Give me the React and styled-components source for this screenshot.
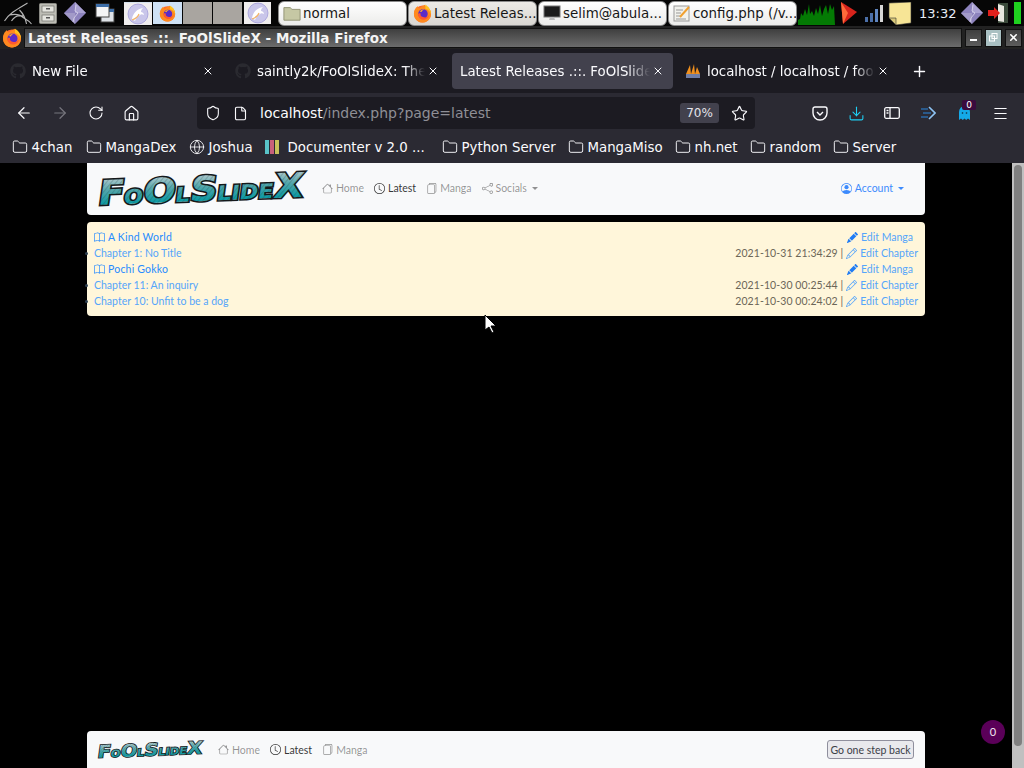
import React from 'react';
import styled, { createGlobalStyle } from 'styled-components';
import {
  ArrowLeft, ArrowRight, RotateCw, Home, Shield, File, Star, Folder, Globe,
  Download, Menu, X, Plus,
} from 'lucide-react';
import {
  BsHouse, BsClock, BsFiles, BsShare, BsPersonCircle, BsBook, BsPencil, BsPencilFill,
} from 'react-icons/bs';
import { FaGithub } from 'react-icons/fa';

const GlobalStyle = createGlobalStyle`
  html, body {
    margin: 0;
    padding: 0;
    background: #000;
    overflow: hidden;
  }
`;

const Screen = styled.div`
  position: relative;
  width: 1024px;
  height: 768px;
  display: flex;
  flex-direction: column;
  overflow: hidden;
  background: #000;
  font-family: "DejaVu Sans", sans-serif;
`;

/* desktop panel */
const Panel = styled.div`
  height: 26px;
  flex: none;
  display: flex;
  align-items: center;
  background: #060606;
  padding-left: 2px;
`;

const PanelIcon = styled.div`
  width: ${props => props.$w}px;
  margin-right: ${props => props.$mr || 0}px;
  height: 24px;
  flex: none;
  display: flex;
  align-items: center;
  justify-content: center;
`;

const Launcher = styled.div`
  width: ${props => props.$w || 28}px;
  height: 22px;
  margin-right: ${props => props.$mr || 1}px;
  flex: none;
  display: flex;
  align-items: center;
  justify-content: center;
  background: ${props => props.$bg || '#f0eeee'};
  border-top: ${props => props.$top ? '1px solid #d6e2ee' : 'none'};
`;

const TaskButton = styled.div`
  width: 129px;
  height: 25px;
  box-sizing: border-box;
  margin-right: 1px;
  flex: none;
  display: flex;
  align-items: center;
  gap: 2px;
  padding: 0 4px;
  border: 1px solid #8b8b8b;
  border-radius: 6px;
  background: ${props => props.$active ? 'linear-gradient(#eceae6, #d9d7d2)' : 'linear-gradient(#ffffff, #ececea)'};
  color: #161616;
  font-size: 13.4px;
  white-space: nowrap;
  overflow: hidden;
  svg {
    flex: none;
  }
`;

const Clock = styled.span`
  width: 36px;
  margin-right: 6px;
  color: #e8eef6;
  font-size: 13px;
  flex: none;
  white-space: nowrap;
`;

/* window title */
const TitleBar = styled.div`
  height: 23px;
  flex: none;
  display: flex;
  align-items: center;
  padding: 0 2px;
  gap: 2px;
  background: #222;
  box-sizing: border-box;
`;

const TitleText = styled.div`
  flex: 1;
  height: 20px;
  box-sizing: border-box;
  padding-left: 3px;
  border: 1px solid #111;
  background: linear-gradient(#3f3f3f, #6c6c6c);
  color: #f4f4f4;
  font-size: 13.5px;
  font-weight: bold;
  line-height: 18px;
  white-space: nowrap;
`;

const WinButton = styled.div`
  width: 17px;
  height: 18px;
  box-sizing: border-box;
  margin-left: 1px;
  flex: none;
  display: flex;
  align-items: center;
  justify-content: center;
  border: 1px solid #111;
  background: ${props => props.$light ? '#a9c0c2' : 'linear-gradient(#3f3f3f, #5d5d5d)'};
  color: #fff;
`;

/* browser tabs */
const TabStrip = styled.div`
  height: 44px;
  flex: none;
  display: flex;
  align-items: center;
  background: #1c1b22;
  color: #fbfbfe;
  font-size: 13.33px;
  padding-left: 2px;
`;

const Tab = styled.div`
  width: 221px;
  height: 36px;
  box-sizing: border-box;
  margin-right: 4px;
  flex: none;
  display: flex;
  align-items: center;
  gap: 6px;
  padding: 0 9px 0 8px;
  border-radius: 4px;
  background: ${props => props.$active ? '#42414d' : 'transparent'};
  svg {
    flex: none;
  }
`;

const TabLabel = styled.span`
  flex: 1;
  min-width: 0;
  margin-right: -4px;
  overflow: hidden;
  white-space: nowrap;
  -webkit-mask-image: linear-gradient(to right, #000 88%, transparent);
  mask-image: linear-gradient(to right, #000 88%, transparent);
`;

const NewTab = styled.div`
  width: 18px;
  margin-left: 8px;
  display: flex;
  justify-content: center;
`;

/* navigation */
const NavBar = styled.div`
  height: 40px;
  flex: none;
  display: flex;
  align-items: center;
  background: #2b2a33;
  color: #fbfbfe;
  padding-left: 15px;
`;

const NavIcon = styled.div`
  width: 18px;
  margin-right: ${props => props.$mr || 0}px;
  flex: none;
  position: relative;
  display: flex;
  align-items: center;
  justify-content: center;
  color: ${props => props.$color || '#fbfbfe'};
`;

const UrlBar = styled.div`
  width: 558px;
  height: 32px;
  box-sizing: border-box;
  margin: 0 56px 0 57px;
  flex: none;
  display: flex;
  align-items: center;
  padding: 0 7px;
  border-radius: 4px;
  background: #1c1b22;
`;

const UrlText = styled.div`
  flex: 1;
  margin-left: 11px;
  font-size: 14px;
  color: #8f8f96;
  white-space: nowrap;
  b {
    font-weight: normal;
    color: #fbfbfe;
  }
`;

const ZoomBadge = styled.div`
  width: 39px;
  height: 20px;
  margin-right: 11px;
  border-radius: 3px;
  background: #42414d;
  font-size: 12px;
  line-height: 20px;
  text-align: center;
  color: #e4e4ea;
`;

const CountBadge = styled.span`
  position: absolute;
  top: -6px;
  left: 7px;
  width: 14px;
  height: 10px;
  border-radius: 2px;
  background: #3a0b3e;
  color: #fff;
  font-size: 9px;
  line-height: 10px;
  text-align: center;
`;

/* bookmarks */
const BookmarkBar = styled.div`
  height: 30px;
  box-sizing: border-box;
  flex: none;
  display: flex;
  align-items: center;
  padding: 0 0 2px 12px;
  background: #2b2a33;
  color: #fbfbfe;
  font-size: 13.33px;
`;

const Bookmark = styled.div`
  width: ${props => props.$w}px;
  flex: none;
  display: flex;
  align-items: center;
  gap: 3.500px;
  white-space: nowrap;
`;

const ColorBars = styled.div`
  display: flex;
  height: 14px;
  width: 14px;
  gap: 1px;
  margin-right: 5px;
  flex: none;
`;

const ColorBar = styled.i`
  flex: 1;
  background: ${props => props.$c};
`;

/* page */
const Viewport = styled.div`
  flex: 1;
  min-height: 0;
  display: flex;
`;

const Page = styled.div`
  flex: 1;
  display: flex;
  flex-direction: column;
  padding: 0 87px;
  color: #212529;
  font-family: Lato, "Noto Sans", sans-serif;
  font-size: 10.5px;
`;

const Scrollbar = styled.div`
  width: 12px;
  flex: none;
  box-sizing: border-box;
  padding: 2px;
  padding-bottom: 22px;
  background: #c0c0c0;
`;

const ScrollThumb = styled.div`
  height: 100%;
  border-radius: 4px;
  background: #808080;
`;

const SiteNav = styled.div`
  height: 52px;
  flex: none;
  box-sizing: border-box;
  display: flex;
  align-items: center;
  padding: 0 21px 2px 10px;
  border-radius: 0 0 4px 4px;
  background: #f8f9fa;
`;

const SiteLinks = styled.div`
  display: flex;
  align-items: center;
  gap: 10px;
  margin-left: ${props => props.$ml}px;
  flex: 1;
`;

const SiteLink = styled.span`
  display: flex;
  align-items: center;
  gap: 3px;
  color: ${props => props.$active ? 'rgba(0, 0, 0, 0.8)' : 'rgba(0, 0, 0, 0.42)'};
  white-space: nowrap;
`;

const Caret = styled.i`
  width: 0;
  height: 0;
  margin-left: 2px;
  border-top: 3px solid currentColor;
  border-left: 3.500px solid transparent;
  border-right: 3.500px solid transparent;
`;

const AccountLink = styled(SiteLink)`
  color: #3d8bfd;
`;

const Notice = styled.ul`
  list-style: none;
  margin: 7px 0 0;
  padding: 7px;
  border-radius: 4px;
  background: #fff6da;
`;

const Row = styled.li`
  position: relative;
  height: 16px;
  display: flex;
  align-items: center;
  justify-content: space-between;
  padding-right: ${props => props.$manga ? 5 : 0}px;
  &::before {
    content: ${props => props.$manga ? 'none' : '""'};
    position: absolute;
    left: -9px;
    top: 7px;
    width: 3px;
    height: 3px;
    border-radius: 50%;
    background: #2c3e50;
  }
`;

const RowLink = styled.span`
  display: flex;
  align-items: center;
  gap: 3px;
  letter-spacing: ${props => props.$strong ? '0.2px' : '0'};
  color: ${props => props.$strong ? '#268bff' : '#55a5fb'};
`;

const EditCol = styled.span`
  display: flex;
  align-items: center;
  gap: 3px;
  color: #6c6658;
`;

const DateText = styled.span`
  letter-spacing: 0.08px;
`;

const Footer = styled(SiteNav)`
  height: 37px;
  margin-top: auto;
  padding: 0 11px 0 10px;
  border-radius: 4px 4px 0 0;
`;

const BackButton = styled.button`
  width: 87px;
  height: 19px;
  padding: 0;
  border: 1px solid #8f8f9d;
  border-radius: 3px;
  background: #e9e9ed;
  color: #3c4048;
  font: inherit;
  font-size: 10.5px;
`;

const NotifyBubble = styled.div`
  position: absolute;
  left: 981px;
  top: 720px;
  width: 24px;
  height: 24px;
  border-radius: 50%;
  background: #5a0058;
  color: #f1e7f1;
  font-family: Lato, sans-serif;
  font-size: 11px;
  line-height: 24px;
  text-align: center;
`;

const Pointer = styled.svg`
  position: absolute;
  left: 484px;
  top: 314px;
`;

const LogoSvg = styled.svg`
  display: block;
  flex: none;
  overflow: visible;
  width: ${props => props.$w}px;
`;

const FirefoxIcon = ({ size = 20 }) => (
  <svg width={size} height={size} viewBox="0 0 20 20">
    <circle cx="10" cy="10.5" r="9" fill="#ff6a2b" />
    <path d="M1 10.5C1 5 4 3 5 2c0 1.500 1 2.500 2 2.500C9 2.500 12 1 13 0.800c-.500 1.500 1 2.200 3 3.700 2.500 2 3 4.500 3 6 0 5-4 9-9 9s-9-4-9-9z" fill="#ff8a1f" />
    <path d="M13 .8c3 1.500 6 5 6 9.700-2-4-4-5-6-5.500z" fill="#ffc31f" />
    <circle cx="10.500" cy="10.500" r="5" fill="#5b2bc9" />
    <path d="M5 11c1 4 4 6 7 5.500 3-.500 5-3 5.500-6-1 2.500-3.500 4-6 3.500-3-.500-4-2-3.500-4-1.500-.500-2.500 0-3 1z" fill="#ff5a30" />
    <path d="M7 8c1-1.500 3-2.500 5-2.500-2 1-3 2-3 3z" fill="#ffb22a" />
  </svg>
);

const KaliIcon = () => (
  <svg width="22" height="22" viewBox="0 0 22 22">
    <circle cx="11" cy="11" r="10" fill="#c9c6ea" stroke="#9a93d6" strokeWidth=".7" />
    <path d="M5 16c1-6 5-10 11-11-2 2-2 3-2 4 1 0 3 1 3 3-2-1-3-1-4 0-2 1-4 3-5 6z" fill="#fff" />
    <path d="M5 17c3-1 6-3 7-6" fill="none" stroke="#f2b36a" strokeWidth="1.200" />
  </svg>
);

const DiamondIcon = ({ size = 22 }) => (
  <svg width={size} height={size} viewBox="0 0 22 22">
    <path d="M11 0l11 11-11 11L0 11z" fill="#8d83bd" />
    <path d="M11 0l11 11H11z" fill="#aaa2d2" />
    <path d="M0 11h11v11z" fill="#a29ac8" />
    <path d="M12 3l-1 6 3 2-4 5-1 4" fill="none" stroke="#dcd8ee" strokeWidth=".8" />
  </svg>
);

const Logo = ({ width }) => (
  <LogoSvg $w={width} viewBox="0 0 210 40">
    <defs>
      <linearGradient id="logoGrad" x1="0" y1="0" x2="0" y2="1">
        <stop offset="0.3" stopColor="#a8c6ca" />
        <stop offset="0.62" stopColor="#4fa5aa" />
        <stop offset="1" stopColor="#0a9aa3" />
      </linearGradient>
      <pattern id="logoFill" patternUnits="userSpaceOnUse" width="5" height="36" patternTransform="skewX(-35)">
        <rect width="5" height="36" fill="url(#logoGrad)" />
        <rect width="1.500" height="36" fill="#1c3b40" opacity="0.2" />
      </pattern>
    </defs>
    <g transform="translate(0 37) skewY(-2.3) skewX(-8)">
      <text
        x="0"
        y="0"
        textLength="205"
        lengthAdjust="spacingAndGlyphs"
        fontFamily="'DejaVu Sans', sans-serif"
        fontWeight="bold"
        fontSize="34"
        fill="url(#logoFill)"
        stroke="#14181a"
        strokeWidth="3"
        paintOrder="stroke"
      >
        F<tspan fontSize="20">O</tspan>O<tspan fontSize="20">L</tspan>S<tspan fontSize="20">LIDE</tspan>X
      </text>
    </g>
  </LogoSvg>
);

const FolderIcon = () => <Folder size={16} strokeWidth={1.4} />;

const Panelbar = () => (
  <Panel>
    <PanelIcon $w={33} $mr={3}>
      <svg width="31" height="24" viewBox="0 0 30 24" fill="none" stroke="#b5b5b5" strokeWidth="1.100">
        <path d="M1 20C6 12 14 8 24 2M6 14c5-1 10-1 13 2 2 2 5 2 9 7M8 20c3-5 8-6 12-5M16 9c3 3 6 8 7 14" />
      </svg>
    </PanelIcon>
    <PanelIcon $w={20} $mr={6}>
      <svg width="18" height="21" viewBox="0 0 18 21">
        <rect x=".5" y=".5" width="17" height="20" rx="1" fill="#bdbdb5" stroke="#8a8a84" />
        <rect x="3" y="3" width="12" height="6" fill="#e4e4de" stroke="#6f6f6a" strokeWidth=".7" />
        <rect x="3" y="12" width="12" height="6" fill="#e4e4de" stroke="#6f6f6a" strokeWidth=".7" />
        <rect x="7" y="5" width="4" height="1.500" fill="#555" />
        <rect x="7" y="14" width="4" height="1.500" fill="#555" />
      </svg>
    </PanelIcon>
    <PanelIcon $w={22} $mr={9}><DiamondIcon /></PanelIcon>
    <PanelIcon $w={20} $mr={9}>
      <svg width="20" height="20" viewBox="0 0 20 20">
        <rect x="6" y="6" width="13" height="13" fill="#dfe3e8" stroke="#444" />
        <rect x="6" y="6" width="13" height="3" fill="#3d6ea8" />
        <rect x="1" y="1" width="13" height="13" fill="#f4f5f6" stroke="#444" />
        <rect x="1" y="1" width="13" height="3" fill="#3d6ea8" />
      </svg>
    </PanelIcon>
    <Launcher $w={28} $top><KaliIcon /></Launcher>
    <Launcher $w={29} $bg="#cfe2f6"><FirefoxIcon size={17} /></Launcher>
    <Launcher $w={29} $bg="#a9a5a0" />
    <Launcher $w={29} $bg="#a9a5a0" $mr={2} />
    <Launcher $w={27} $mr={7}><KaliIcon /></Launcher>
    <TaskButton>
      <svg width="18" height="18" viewBox="0 0 20 18">
        <path d="M1 3h7l2 2h9v12H1z" fill="#c6c8a4" stroke="#8d8f70" />
      </svg>
      normal
    </TaskButton>
    <TaskButton $active><FirefoxIcon size={19} />Latest Releas...</TaskButton>
    <TaskButton>
      <svg width="18" height="18" viewBox="0 0 18 18">
        <rect x="1" y="2" width="16" height="11" fill="#1c1c1c" stroke="#777" />
        <path d="M6 16h6l-1-3H7z" fill="#bbb" />
      </svg>
      selim@abula...
    </TaskButton>
    <TaskButton>
      <svg width="18" height="18" viewBox="0 0 18 18">
        <rect x="1" y="2" width="15" height="15" fill="#f1f1ec" stroke="#999" />
        <path d="M3 6h7M3 9h5M3 12h4M3 15h10" stroke="#999" />
        <path d="M7 13L16 3" stroke="#f0a030" strokeWidth="2" />
      </svg>
      config.php (/v...
    </TaskButton>
    <PanelIcon $w={37} $mr={6}>
      <svg width="37" height="24" viewBox="0 0 37 24">
        <path d="M0 24V19L2 18 3 12 5 15 7 8 9 14 11 3 12 13 14 10 16 15 18 7 20 13 22 4 24 15 26 8 28 4 30 13 32 3 34 9 36 5 37 24z" fill="#047a04" />
      </svg>
    </PanelIcon>
    <PanelIcon $w={16} $mr={8}>
      <svg width="16" height="24" viewBox="0 0 16 24">
        <path d="M0 1l16 10L2 23z" fill="#d8241c" />
        <path d="M0 1l7 11-5 11z" fill="#ff6a3a" />
      </svg>
    </PanelIcon>
    <PanelIcon $w={18} $mr={5}>
      <svg width="18" height="18" viewBox="0 0 18 18">
        <rect x="0" y="13" width="3" height="5" fill="#4b6fa8" />
        <rect x="5" y="9" width="3" height="9" fill="#4b6fa8" />
        <rect x="10" y="5" width="3" height="13" fill="#5f86c0" />
        <rect x="15" y="1" width="3" height="17" fill="#d6d6d6" />
      </svg>
    </PanelIcon>
    <PanelIcon $w={24} $mr={7}>
      <svg width="24" height="23" viewBox="0 0 24 23">
        <path d="M1 1l22-1v21l-15 2-7-7z" fill="#f7e596" stroke="#333" strokeWidth=".6" />
        <path d="M1 16l7 0v7z" fill="#d8c878" stroke="#333" strokeWidth=".6" />
      </svg>
    </PanelIcon>
    <Clock>13:32</Clock>
    <PanelIcon $w={22} $mr={5}><DiamondIcon /></PanelIcon>
    <PanelIcon $w={21} $mr={5}>
      <svg width="21" height="20" viewBox="0 0 21 20">
        <path d="M10 0h10v20H10z" fill="#3b4a3b" />
        <path d="M10 1l6 2v16l-6-1z" fill="#e8e6df" />
        <path d="M0 7h6V4l6 6-6 6v-3H0z" fill="#e0201c" />
      </svg>
    </PanelIcon>
    <Launcher $w={7} $bg="#1fd11f" />
  </Panel>
);

const WindowTitle = () => (
  <TitleBar>
    <FirefoxIcon size={20} />
    <TitleText>Latest Releases .::. FoOlSlideX - Mozilla Firefox</TitleText>
    <WinButton>
      <svg width="7" height="7" viewBox="0 0 7 7"><rect y="5" width="7" height="2" fill="#fff" /></svg>
    </WinButton>
    <WinButton $light>
      <svg width="9" height="9" viewBox="0 0 9 9" fill="none" stroke="#fff">
        <rect x="3" y=".5" width="5" height="5" />
        <rect x=".5" y="3" width="5" height="5" />
      </svg>
    </WinButton>
    <WinButton><X size={11} strokeWidth={3.5} /></WinButton>
  </TitleBar>
);

const Tabs = () => (
  <TabStrip>
    <Tab>
      <FaGithub size={16} color="#2a2a30" />
      <TabLabel>New File</TabLabel>
      <X size={12} />
    </Tab>
    <Tab>
      <FaGithub size={16} color="#2a2a30" />
      <TabLabel>saintly2k/FoOlSlideX: The</TabLabel>
      <X size={12} />
    </Tab>
    <Tab $active>
      <TabLabel>Latest Releases .::. FoOlSlide</TabLabel>
      <X size={12} />
    </Tab>
    <Tab>
      <svg width="16" height="16" viewBox="0 0 16 16">
        <path d="M1 11L5 2l1 9zM6 11l3-10 1 10zM10 11l2-7 3 7z" fill="#f0901e" />
        <rect x="1" y="11" width="14" height="4" fill="#6f7ea6" />
      </svg>
      <TabLabel>localhost / localhost / fool</TabLabel>
      <X size={12} />
    </Tab>
    <NewTab><Plus size={17} /></NewTab>
  </TabStrip>
);

const Navigation = () => (
  <NavBar>
    <NavIcon $mr={18}><ArrowLeft size={18} strokeWidth={1.6} /></NavIcon>
    <NavIcon $mr={18} $color="#77767e"><ArrowRight size={18} strokeWidth={1.6} /></NavIcon>
    <NavIcon $mr={17}><RotateCw size={16} strokeWidth={1.6} /></NavIcon>
    <NavIcon><Home size={17} strokeWidth={1.6} /></NavIcon>
    <UrlBar>
      <NavIcon $mr={9}><Shield size={16} strokeWidth={1.6} /></NavIcon>
      <NavIcon><File size={15} strokeWidth={1.8} /></NavIcon>
      <UrlText><b>localhost</b>/index.php?page=latest</UrlText>
      <ZoomBadge>70%</ZoomBadge>
      <NavIcon><Star size={17} strokeWidth={1.6} /></NavIcon>
    </UrlBar>
    <NavIcon $mr={18}>
      <svg width="16" height="15" viewBox="0 0 16 15" fill="none" stroke="currentColor" strokeWidth="1.400">
        <path d="M1 3a2 2 0 0 1 2-2h10a2 2 0 0 1 2 2v4a7 7 0 0 1-14 0z" />
        <path d="M5 6l3 3 3-3" />
      </svg>
    </NavIcon>
    <NavIcon $mr={18} $color="#1fd0f5"><Download size={17} strokeWidth={1.5} /></NavIcon>
    <NavIcon $mr={18}>
      <svg width="16" height="12" viewBox="0 0 16 12" fill="none" stroke="currentColor" strokeWidth="1.300">
        <rect x=".7" y=".7" width="14.600" height="10.600" rx="1.500" />
        <path d="M6 1v10M2.500 3.500h2M2.500 6h2" />
      </svg>
    </NavIcon>
    <NavIcon $mr={18}>
      <svg width="15" height="14" viewBox="0 0 15 14" fill="none" strokeWidth="1.600">
        <path d="M8 1l6 6-6 6" stroke="#8fc4f4" />
        <path d="M0 3h7M2 7h8M0 11h7" stroke="#2b6aa8" />
      </svg>
    </NavIcon>
    <NavIcon $mr={18}>
      <svg width="13" height="14" viewBox="0 0 13 14">
        <path d="M1 14V6a5.500 6 0 0 1 11 0v8l-2-1.500-1.800 1.500-1.700-1.500-1.700 1.500-1.800-1.500z" fill="#14a9e8" />
        <circle cx="4.500" cy="7" r=".8" fill="#123" />
        <circle cx="8.500" cy="7" r=".8" fill="#123" />
      </svg>
      <CountBadge>0</CountBadge>
    </NavIcon>
    <NavIcon><Menu size={17} strokeWidth={1.5} /></NavIcon>
  </NavBar>
);

const bookmarks = [
  ['4chan', 74],
  ['MangaDex', 103],
  ['Joshua', 76],
];

const laterBookmarks = [
  ['Python Server', 126],
  ['MangaMiso', 107],
  ['nh.net', 75],
  ['random', 83],
  ['Server', 70],
];

const Bookmarks = () => (
  <BookmarkBar>
    {bookmarks.map(([name, w]) => (
      <Bookmark key={name} $w={w}>
        {name === 'Joshua' ? <Globe size={16} strokeWidth={1.3} /> : <FolderIcon />}
        {name}
      </Bookmark>
    ))}
    <Bookmark $w={177}>
      <ColorBars>
        <ColorBar $c="#59c3c8" />
        <ColorBar $c="#c8607a" />
        <ColorBar $c="#c8c05a" />
      </ColorBars>
      Documenter v 2.0 ...
    </Bookmark>
    {laterBookmarks.map(([name, w]) => (
      <Bookmark key={name} $w={w}>
        <FolderIcon />
        {name}
      </Bookmark>
    ))}
  </BookmarkBar>
);

const releases = [
  { manga: 'A Kind World' },
  { chapter: 'Chapter 1: No Title', date: '2021-10-31 21:34:29' },
  { manga: 'Pochi Gokko' },
  { chapter: 'Chapter 11: An inquiry', date: '2021-10-30 00:25:44' },
  { chapter: 'Chapter 10: Unfit to be a dog', date: '2021-10-30 00:24:02' },
];

const ReleaseRow = ({ item }) => (item.manga ? (
  <Row $manga>
    <RowLink $strong><BsBook size={11} />{item.manga}</RowLink>
    <EditCol>
      <RowLink><BsPencilFill size={11} color="#1f7cf5" />Edit Manga</RowLink>
    </EditCol>
  </Row>
) : (
  <Row>
    <RowLink>{item.chapter}</RowLink>
    <EditCol>
      <DateText>{item.date} |</DateText>
      <RowLink><BsPencil size={11} />Edit Chapter</RowLink>
    </EditCol>
  </Row>
));

const App = () => (
  <Screen>
    <GlobalStyle />
    <Panelbar />
    <WindowTitle />
    <Tabs />
    <Navigation />
    <Bookmarks />
    <Viewport>
      <Page>
        <SiteNav>
          <Logo width={210} />
          <SiteLinks $ml={15}>
            <SiteLink><BsHouse size={11} />Home</SiteLink>
            <SiteLink $active><BsClock size={11} />Latest</SiteLink>
            <SiteLink><BsFiles size={11} />Manga</SiteLink>
            <SiteLink><BsShare size={11} />Socials<Caret /></SiteLink>
          </SiteLinks>
          <AccountLink><BsPersonCircle size={11} />Account<Caret /></AccountLink>
        </SiteNav>
        <Notice>
          {releases.map(item => (
            <ReleaseRow key={item.manga || item.chapter} item={item} />
          ))}
        </Notice>
        <Footer>
          <Logo width={107} />
          <SiteLinks $ml={14}>
            <SiteLink><BsHouse size={11} />Home</SiteLink>
            <SiteLink $active><BsClock size={11} />Latest</SiteLink>
            <SiteLink><BsFiles size={11} />Manga</SiteLink>
          </SiteLinks>
          <BackButton>Go one step back</BackButton>
        </Footer>
      </Page>
      <Scrollbar><ScrollThumb /></Scrollbar>
    </Viewport>
    <NotifyBubble>0</NotifyBubble>
    <Pointer width="12" height="20" viewBox="0 0 12 20">
      <path d="M1 1v15l4-3 3 6 2-1-3-6h5z" fill="#fff" stroke="#000" />
    </Pointer>
  </Screen>
);

export default App;
